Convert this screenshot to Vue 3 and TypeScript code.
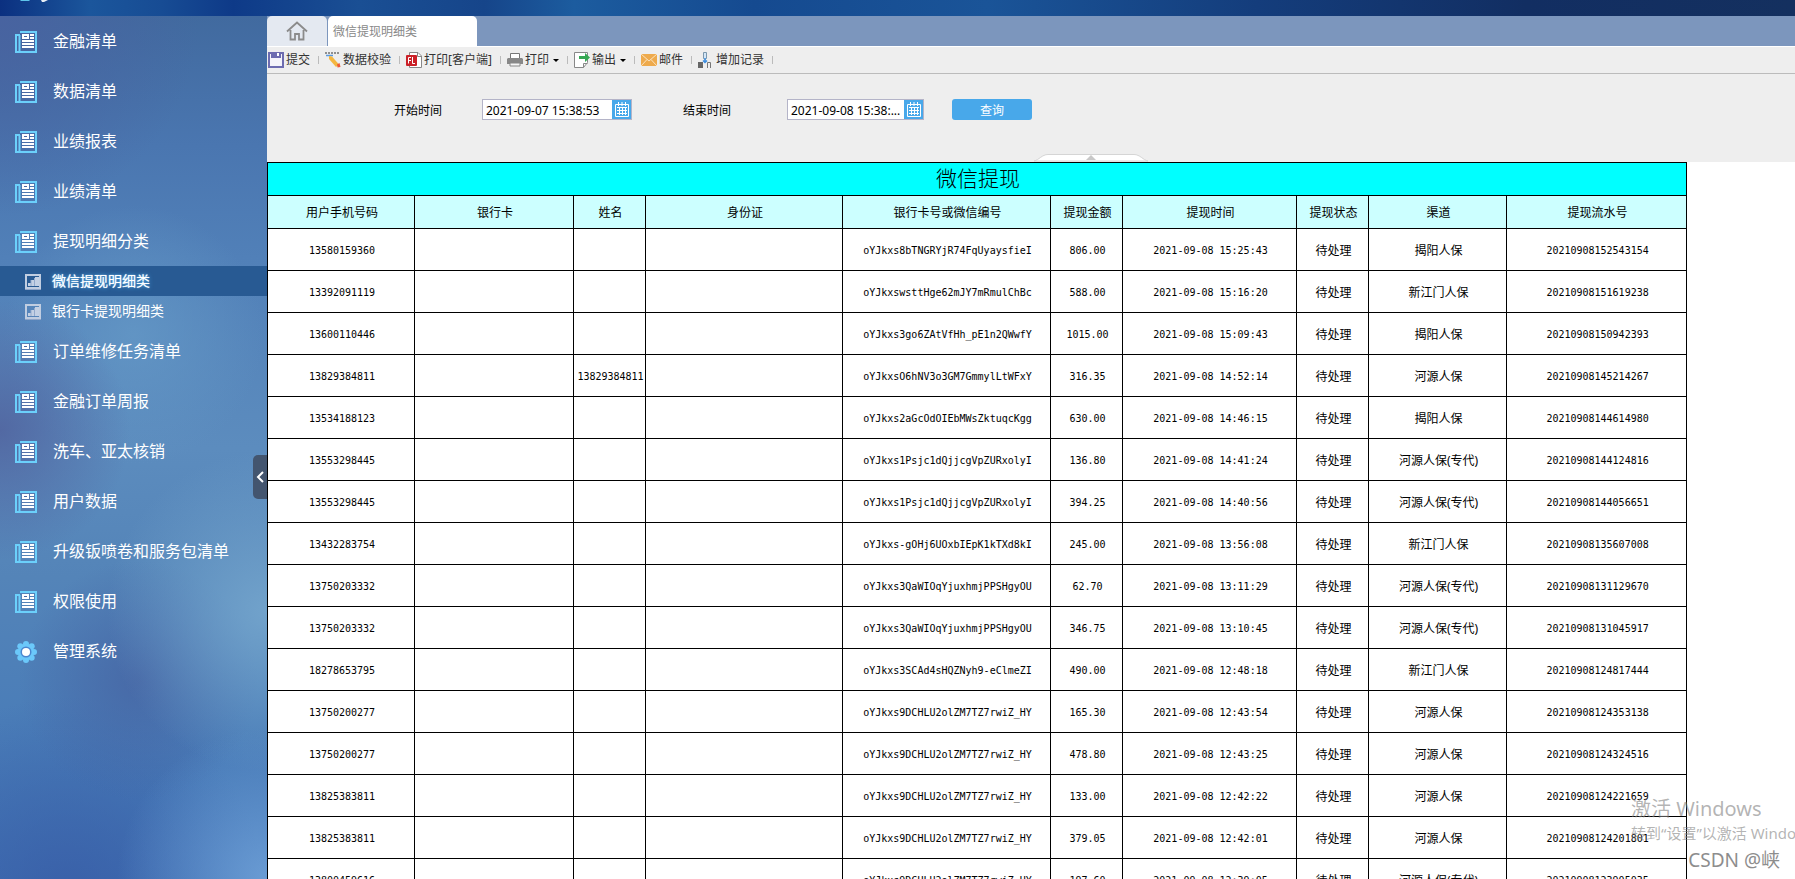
<script setup lang="ts">
import { ref } from 'vue'

interface Withdrawal {
  phone: string
  name?: string
  wechat: string
  amount: string
  time: string
  channel: string
  serial: string
}

const menuTop = ['金融清单', '数据清单', '业绩报表', '业绩清单', '提现明细分类']
const menuSub = ['微信提现明细类', '银行卡提现明细类']
const menuBottom = ['订单维修任务清单', '金融订单周报', '洗车、亚太核销', '用户数据', '升级钣喷卷和服务包清单', '权限使用']

const activeSub = ref(0)
const startTime = ref('2021-09-07 15:38:53')
const endTime = ref('2021-09-08 15:38:...')

const tools = [
  { icon: 'save', label: '提交' },
  { icon: 'check', label: '数据校验' },
  { icon: 'flash', label: '打印[客户端]' },
  { icon: 'print', label: '打印', menu: true },
  { icon: 'export', label: '输出', menu: true },
  { icon: 'mail', label: '邮件' },
  { icon: 'add', label: '增加记录' },
]

const columns = [
  { title: '用户手机号码', cls: 'c-phone' },
  { title: '银行卡', cls: 'c-bank' },
  { title: '姓名', cls: 'c-small' },
  { title: '身份证', cls: 'c-id' },
  { title: '银行卡号或微信编号', cls: 'c-wechat' },
  { title: '提现金额', cls: 'c-small' },
  { title: '提现时间', cls: 'c-time' },
  { title: '提现状态', cls: 'c-small' },
  { title: '渠道', cls: 'c-channel' },
  { title: '提现流水号', cls: 'c-serial' },
]

const rows: Withdrawal[] = [
  { phone: '13580159360', wechat: 'oYJkxs8bTNGRYjR74FqUyaysfieI', amount: '806.00', time: '2021-09-08 15:25:43', channel: '揭阳人保', serial: '20210908152543154' },
  { phone: '13392091119', wechat: 'oYJkxswsttHge62mJY7mRmulChBc', amount: '588.00', time: '2021-09-08 15:16:20', channel: '新江门人保', serial: '20210908151619238' },
  { phone: '13600110446', wechat: 'oYJkxs3go6ZAtVfHh_pE1n2QWwfY', amount: '1015.00', time: '2021-09-08 15:09:43', channel: '揭阳人保', serial: '20210908150942393' },
  { phone: '13829384811', name: '13829384811', wechat: 'oYJkxsO6hNV3o3GM7GmmylLtWFxY', amount: '316.35', time: '2021-09-08 14:52:14', channel: '河源人保', serial: '20210908145214267' },
  { phone: '13534188123', wechat: 'oYJkxs2aGcOdOIEbMWsZktuqcKgg', amount: '630.00', time: '2021-09-08 14:46:15', channel: '揭阳人保', serial: '20210908144614980' },
  { phone: '13553298445', wechat: 'oYJkxs1Psjc1dQjjcgVpZURxolyI', amount: '136.80', time: '2021-09-08 14:41:24', channel: '河源人保(专代)', serial: '20210908144124816' },
  { phone: '13553298445', wechat: 'oYJkxs1Psjc1dQjjcgVpZURxolyI', amount: '394.25', time: '2021-09-08 14:40:56', channel: '河源人保(专代)', serial: '20210908144056651' },
  { phone: '13432283754', wechat: 'oYJkxs-gOHj6UOxbIEpK1kTXd8kI', amount: '245.00', time: '2021-09-08 13:56:08', channel: '新江门人保', serial: '20210908135607008' },
  { phone: '13750203332', wechat: 'oYJkxs3QaWIOqYjuxhmjPPSHgyOU', amount: '62.70', time: '2021-09-08 13:11:29', channel: '河源人保(专代)', serial: '20210908131129670' },
  { phone: '13750203332', wechat: 'oYJkxs3QaWIOqYjuxhmjPPSHgyOU', amount: '346.75', time: '2021-09-08 13:10:45', channel: '河源人保(专代)', serial: '20210908131045917' },
  { phone: '18278653795', wechat: 'oYJkxs3SCAd4sHQZNyh9-eClmeZI', amount: '490.00', time: '2021-09-08 12:48:18', channel: '新江门人保', serial: '20210908124817444' },
  { phone: '13750200277', wechat: 'oYJkxs9DCHLU2olZM7TZ7rwiZ_HY', amount: '165.30', time: '2021-09-08 12:43:54', channel: '河源人保', serial: '20210908124353138' },
  { phone: '13750200277', wechat: 'oYJkxs9DCHLU2olZM7TZ7rwiZ_HY', amount: '478.80', time: '2021-09-08 12:43:25', channel: '河源人保', serial: '20210908124324516' },
  { phone: '13825383811', wechat: 'oYJkxs9DCHLU2olZM7TZ7rwiZ_HY', amount: '133.00', time: '2021-09-08 12:42:22', channel: '河源人保', serial: '20210908124221659' },
  { phone: '13825383811', wechat: 'oYJkxs9DCHLU2olZM7TZ7rwiZ_HY', amount: '379.05', time: '2021-09-08 12:42:01', channel: '河源人保', serial: '20210908124201801' },
  { phone: '13800459616', wechat: 'oYJkxs9DCHLU2olZM7TZ7rwiZ_HY', amount: '197.60', time: '2021-09-08 12:39:05', channel: '河源人保(专代)', serial: '20210908123905035' },
]
</script>

<template>
  <div class="app">
    <header class="banner">
      <svg class="brand" width="30" height="2" viewBox="0 0 30 2" aria-hidden="true">
        <path d="M0 0h10l-1 1H1z" fill="#5fc4ea" />
        <path d="M21 0h7l-4 2h-2z" fill="#e8eef6" />
      </svg>
    </header>

    <div class="body">
      <aside class="sidebar">
        <nav>
          <a v-for="m in menuTop" :key="m" class="item" href="#">
            <svg width="22" height="22" viewBox="0 0 22 22" aria-hidden="true">
              <path d="M5 1h16v20H1V4h4M4.500 4v17" fill="none" stroke="#6bd0fb" stroke-width="2" />
              <path d="M7 3h7v5H7zM15 3h4v2h-4zM15 6h4v2h-4zM7 9h12v2H7zM7 12h12v2H7zM7 15h12v2H7z" fill="#fff" />
              <path d="M9 5h3v1H9z" fill="#4868a4" />
            </svg>
            <span>{{ m }}</span>
          </a>
          <a
            v-for="(m, i) in menuSub"
            :key="m"
            class="sub"
            :class="{ active: activeSub === i }"
            href="#"
            @click.prevent="activeSub = i"
          >
            <svg width="16" height="16" viewBox="0 0 16 16" aria-hidden="true">
              <path d="M1 1h14v13H1z" fill="none" stroke="#c0cde1" stroke-width="2" />
              <path d="M0 15.500h16" stroke="#8fa5c8" stroke-width="1" />
              <path d="M3 9h3v3H3zM6 6h4v6H6zM10 3h4v9h-4z" fill="#c3d0e4" />
              <path d="M6 6v6M9.500 4v8" stroke="#93a9cb" />
            </svg>
            <span>{{ m }}</span>
          </a>
          <a v-for="m in menuBottom" :key="m" class="item" href="#">
            <svg width="22" height="22" viewBox="0 0 22 22" aria-hidden="true">
              <path d="M5 1h16v20H1V4h4M4.500 4v17" fill="none" stroke="#6bd0fb" stroke-width="2" />
              <path d="M7 3h7v5H7zM15 3h4v2h-4zM15 6h4v2h-4zM7 9h12v2H7zM7 12h12v2H7zM7 15h12v2H7z" fill="#fff" />
              <path d="M9 5h3v1H9z" fill="#4868a4" />
            </svg>
            <span>{{ m }}</span>
          </a>
          <a class="item" href="#">
            <svg width="22" height="22" viewBox="0 0 22 22" aria-hidden="true">
              <g fill="#6bc8fa">
                <circle cx="11" cy="11" r="8" />
                <circle cx="11" cy="3" r="3" />
                <circle cx="11" cy="19" r="3" />
                <circle cx="3" cy="11" r="3" />
                <circle cx="19" cy="11" r="3" />
                <circle cx="5.300" cy="5.300" r="3" />
                <circle cx="16.700" cy="5.300" r="3" />
                <circle cx="5.300" cy="16.700" r="3" />
                <circle cx="16.700" cy="16.700" r="3" />
              </g>
              <circle cx="11" cy="11" r="5.500" fill="#4b86cf" />
              <circle cx="11" cy="11" r="4" fill="#fff" />
            </svg>
            <span>管理系统</span>
          </a>
        </nav>
        <button class="collapse" type="button" aria-label="收起菜单">
          <svg width="8" height="12" viewBox="0 0 8 12" aria-hidden="true">
            <path d="M7 1L2 6l5 5" fill="none" stroke="#fff" stroke-width="2" />
          </svg>
        </button>
      </aside>

      <main class="main">
        <div class="tabs">
          <button class="tab home" type="button" aria-label="首页">
            <svg width="22" height="20" viewBox="0 0 22 20" aria-hidden="true">
              <path d="M1 10.500L11 1.500l10 9M4.500 9v9.500H9V13h4v5.500h4.500V9" fill="none" stroke="#8b8b8b" stroke-width="1.800" />
            </svg>
          </button>
          <button class="tab current" type="button">微信提现明细类</button>
        </div>

        <div class="toolbar">
          <button v-for="t in tools" :key="t.label" class="tool" type="button">
            <svg width="16" height="16" viewBox="0 0 16 16" aria-hidden="true">
              <g v-if="t.icon === 'save'">
                <path d="M1 1h14v14H1z" fill="#f4f4fa" stroke="#6d6cb0" stroke-width="2" />
                <path d="M3 0h10v6H3z" fill="#6d6cb0" />
                <path d="M9 1h2v3H9z" fill="#fff" />
              </g>
              <g v-else-if="t.icon === 'check'">
                <path d="M0 1h15" stroke="#333" stroke-width="1" stroke-dasharray="2 1" />
                <path d="M1 3.500h7" stroke="#5b9be0" stroke-width="1.500" />
                <path d="M4 4l3 .5 7 8-3 2.500-7-8z" fill="#f4b63f" />
                <path d="M12 12.500l2.500-1.500 1 4-3 .500z" fill="#ee5a35" />
              </g>
              <g v-else-if="t.icon === 'flash'">
                <path d="M3.500.500H12L15.500 4v11.500h-12z" fill="#fff" stroke="#888" />
                <path d="M11.500.500V4.500h4" fill="none" stroke="#888" />
                <rect y="3" width="11" height="11" rx="1" fill="#cb2027" />
                <path d="M2.500 11.500v-6H5M2.500 8.500H5M6.500 5v6.500H9" fill="none" stroke="#fff" />
              </g>
              <g v-else-if="t.icon === 'print'">
                <path d="M3.500 1.500h9v5h-9z" fill="#fff" stroke="#777" />
                <path d="M1 6h14l1 1v5H0V7z" fill="#888" />
                <path d="M3 11h10v3H3z" fill="#f6f6f6" stroke="#888" />
              </g>
              <g v-else-if="t.icon === 'export'">
                <path d="M.500.500h13v10l-4 5h-9z" fill="#fff" stroke="#888" />
                <path d="M9.500 15.500v-4h4" fill="none" stroke="#888" />
                <path d="M5 4h6V1l5 4.500L11 10V7H5z" fill="#35a853" />
              </g>
              <g v-else-if="t.icon === 'mail'">
                <path d="M0 2h16v12H0z" fill="#eeaa4c" />
                <path d="M0 2l8 7 8-7M0 14l6-6.500M16 14l-6-6.500" fill="none" stroke="#fbe3c0" />
              </g>
              <g v-else>
                <path d="M5.500.500h3v6l-1.500 1-1.500-1z" fill="#d4e6f6" stroke="#7b97ad" />
                <path d="M7 6v4M5 8.500l2 2 2-2" fill="none" stroke="#3c8de0" stroke-width="1.500" />
                <path d="M0 10h5v6H0z" fill="#666" />
                <path d="M9.500 16v-5.500h3V16" fill="none" stroke="#777" />
              </g>
            </svg>
            <span>{{ t.label }}</span>
            <i v-if="t.menu" class="caret"></i>
          </button>
        </div>

        <form class="filters" @submit.prevent>
          <label class="label-start" for="start">开始时间</label>
          <div class="date date-start">
            <input id="start" v-model="startTime" type="text" />
            <button type="button" aria-label="选择开始时间">
              <svg width="14" height="15" viewBox="0 0 14 15" aria-hidden="true">
                <path d="M.500 2.500h13v12H.500zM2 5.500h10M2 8.500h10M2 11.500h10M4.500 5v8M7.500 5v8M10.500 5v8" fill="none" stroke="#fff" />
                <path d="M3.500 0v4M7 0v4M10.500 0v4" stroke="#fff" />
              </svg>
            </button>
          </div>
          <label class="label-end" for="end">结束时间</label>
          <div class="date date-end">
            <input id="end" v-model="endTime" type="text" />
            <button type="button" aria-label="选择结束时间">
              <svg width="14" height="15" viewBox="0 0 14 15" aria-hidden="true">
                <path d="M.500 2.500h13v12H.500zM2 5.500h10M2 8.500h10M2 11.500h10M4.500 5v8M7.500 5v8M10.500 5v8" fill="none" stroke="#fff" />
                <path d="M3.500 0v4M7 0v4M10.500 0v4" stroke="#fff" />
              </svg>
            </button>
          </div>
          <button class="query" type="submit">查询</button>
          <svg class="fold" width="116" height="8" viewBox="0 0 116 8" aria-hidden="true">
            <path d="M1 7C6 6 9 .500 15 .500h86c6 0 9 5.500 14 6.500z" fill="#fff" stroke="#d5d5d5" />
            <path d="M53 6L58 1l5 5z" fill="#c8c8c8" />
          </svg>
        </form>

        <div class="sheet">
          <table>
            <colgroup>
              <col v-for="c in columns" :key="c.title" :class="c.cls" />
            </colgroup>
            <thead>
              <tr class="title"><th :colspan="columns.length">微信提现</th></tr>
              <tr class="heads"><th v-for="c in columns" :key="c.title">{{ c.title }}</th></tr>
            </thead>
            <tbody>
              <tr v-for="r in rows" :key="r.serial">
                <td class="num">{{ r.phone }}</td>
                <td></td>
                <td class="num">{{ r.name }}</td>
                <td></td>
                <td class="num">{{ r.wechat }}</td>
                <td class="num">{{ r.amount }}</td>
                <td class="num">{{ r.time }}</td>
                <td>待处理</td>
                <td>{{ r.channel }}</td>
                <td class="num">{{ r.serial }}</td>
              </tr>
            </tbody>
          </table>
        </div>
      </main>
    </div>

    <div class="activation">
      <p class="act-title">激活 Windows</p>
      <p class="act-text">转到“设置”以激活 Windows。</p>
    </div>
    <p class="credit">CSDN @峡</p>
  </div>
</template>

<style>
body {
  margin: 0;
  overflow: hidden;
}
</style>

<style scoped>
.app {
  position: relative;
  display: flex;
  flex-direction: column;
  height: 100vh;
  overflow: hidden;
  font-family: "Noto Sans", "Noto Sans CJK SC", sans-serif;
  font-size: 12px;
  color: #000;
  background: #fff;
}
button {
  font: inherit;
  padding: 0;
  border: 0;
  cursor: pointer;
}
svg {
  display: block;
  flex: none;
}
.banner {
  flex: none;
  height: 16px;
  padding-left: 20px;
  background: linear-gradient(90deg, #0b3080 0%, #1b569c 5%, #174c94 9%, #0e3a88 13%, #1a4f94 20%, #16458a 27%, #1c5c9f 32%, #154a90 42%, #1a5498 55%, #143d7c 70%, #122e62 85%, #14305f 100%);
}
.body {
  display: flex;
  flex: 1;
  min-height: 0;
}
.sidebar {
  position: relative;
  flex: none;
  width: 267px;
  background:
    radial-gradient(circle at 100% 100%, rgba(110, 160, 215, 0.9) 0, transparent 150px),
    radial-gradient(circle at 100% 69%, rgba(117, 166, 205, 0.9) 0, transparent 160px),
    radial-gradient(circle at 52% 77%, rgba(70, 100, 163, 0.8) 0, transparent 120px),
    radial-gradient(circle at 0 48%, rgba(80, 96, 156, 0.8) 0, transparent 130px),
    radial-gradient(circle at 50% 37%, rgba(100, 152, 198, 0.8) 0, transparent 130px),
    radial-gradient(circle at 0 0, #4863a0 0, transparent 200px),
    radial-gradient(circle at 25% 102%, rgba(56, 92, 166, 0.8) 0, transparent 200px),
    linear-gradient(180deg, #416a9f 0%, #4a76b0 15%, #5180b8 28%, #5c8cbe 50%, #5484b8 65%, #4a7db8 82%, #4072b4 100%);
}
.item {
  display: flex;
  align-items: center;
  gap: 16px;
  height: 50px;
  padding: 2px 0 0 15px;
  box-sizing: border-box;
  font-size: 16px;
  color: #fff;
  text-decoration: none;
}
.item span,
.sub span {
  margin-top: -4px;
}
.sub {
  display: flex;
  align-items: center;
  gap: 11px;
  height: 30px;
  padding: 2px 0 0 25px;
  box-sizing: border-box;
  font-size: 14px;
  color: #fff;
  text-decoration: none;
}
.sub.active {
  background: #285a93;
  text-shadow: 0 0 4px #4cb4f5, 0 0 1px #fff;
}
.collapse {
  position: absolute;
  right: 0;
  top: 439px;
  width: 14px;
  height: 44px;
  display: flex;
  align-items: center;
  justify-content: center;
  background: #43556f;
  border-radius: 5px 0 0 5px;
}
.main {
  flex: 1;
  min-width: 0;
  display: flex;
  flex-direction: column;
}
.tabs {
  display: flex;
  gap: 1px;
  height: 30px;
  flex: none;
  background: #7c96bd;
  border-bottom: 1px solid #fff;
}
.tab {
  border-radius: 5px 5px 0 0;
}
.home {
  display: flex;
  align-items: center;
  justify-content: center;
  width: 60px;
  background: #e4e9f1;
}
.current {
  width: 149px;
  padding: 0 0 0 5px;
  background: #fff;
  color: #888;
  text-align: left;
}
.toolbar {
  display: flex;
  flex: none;
  align-items: center;
  height: 26px;
  background: #eee;
  border-bottom: 1px solid #bbb;
}
.tool {
  display: flex;
  align-items: center;
  gap: 2px;
  padding: 0 9px 0 6px;
  background: none;
  color: #333;
  line-height: 16px;
  position: relative;
}
.tool:first-child {
  padding-left: 1px;
}
.tool::after {
  content: "";
  position: absolute;
  right: 0;
  top: 4px;
  width: 1px;
  height: 8px;
  background: #bbb;
}
.caret {
  margin-left: 2px;
  border: 3px solid transparent;
  border-top-color: #000;
  border-bottom: 0;
}
.filters {
  position: relative;
  display: flex;
  flex: none;
  align-items: flex-start;
  height: 88px;
  padding: 25px 0 0 127px;
  box-sizing: border-box;
  background: #eee;
}
.filters label {
  line-height: 23px;
}
.label-start {
  width: 88px;
}
.label-end {
  width: 104px;
  margin-left: 51px;
}
.date {
  display: flex;
  height: 21px;
  box-sizing: border-box;
  border: 1px solid #b4b4c8;
  background: #fff;
}
.date-start {
  width: 150px;
}
.date-end {
  width: 137px;
}
.date input {
  flex: 1;
  min-width: 0;
  padding: 2px 0 0 3px;
  border: 0;
  outline: 0;
  font: inherit;
  color: #000;
  background: none;
}
.date button {
  display: flex;
  flex: none;
  align-items: center;
  justify-content: center;
  width: 19px;
  background: #48a8ea;
}
.query {
  width: 80px;
  height: 21px;
  padding-top: 2px;
  margin-left: 28px;
  border-radius: 3px;
  background: #48a8ea;
  color: #fff;
  line-height: 19px;
}
.fold {
  position: absolute;
  left: 50%;
  bottom: 0;
  margin-left: 2px;
}
.sheet {
  flex: 1;
  min-height: 0;
  overflow: hidden;
}
table {
  width: 1420px;
  table-layout: fixed;
  border-collapse: collapse;
}
.c-phone { width: 147px; }
.c-bank { width: 159px; }
.c-small { width: 72px; }
.c-id { width: 197px; }
.c-wechat { width: 208px; }
.c-time { width: 174px; }
.c-channel { width: 138px; }
.c-serial { width: 180px; }
th,
td {
  box-sizing: border-box;
  padding: 2px 0 0 2px;
  border: 1px solid #000;
  text-align: center;
  font-weight: 400;
  line-height: 16px;
  white-space: nowrap;
}
td {
  height: 42px;
}
th {
  height: 33px;
}
.title th {
  padding: 0 0 2px 2px;
  background: #0ff;
  font-size: 21px;
  font-weight: 300;
  line-height: 24px;
}
.heads th {
  background: #cff;
}
.num {
  font-family: "DejaVu Sans Mono", monospace;
  font-size: 10px;
}
.activation,
.credit {
  position: absolute;
  margin: 0;
  white-space: nowrap;
  pointer-events: none;
}
.activation {
  left: calc(100% - 164px);
  bottom: 34px;
  color: rgba(130, 130, 130, 0.6);
}
.activation p {
  margin: 0;
}
.act-title {
  font-size: 20px;
  line-height: 24px;
}
.act-text {
  font-size: 15px;
  line-height: 24px;
}
.credit {
  right: 15px;
  bottom: 6px;
  font-size: 19px;
  line-height: 26px;
  color: #8d8d8d;
}
</style>
